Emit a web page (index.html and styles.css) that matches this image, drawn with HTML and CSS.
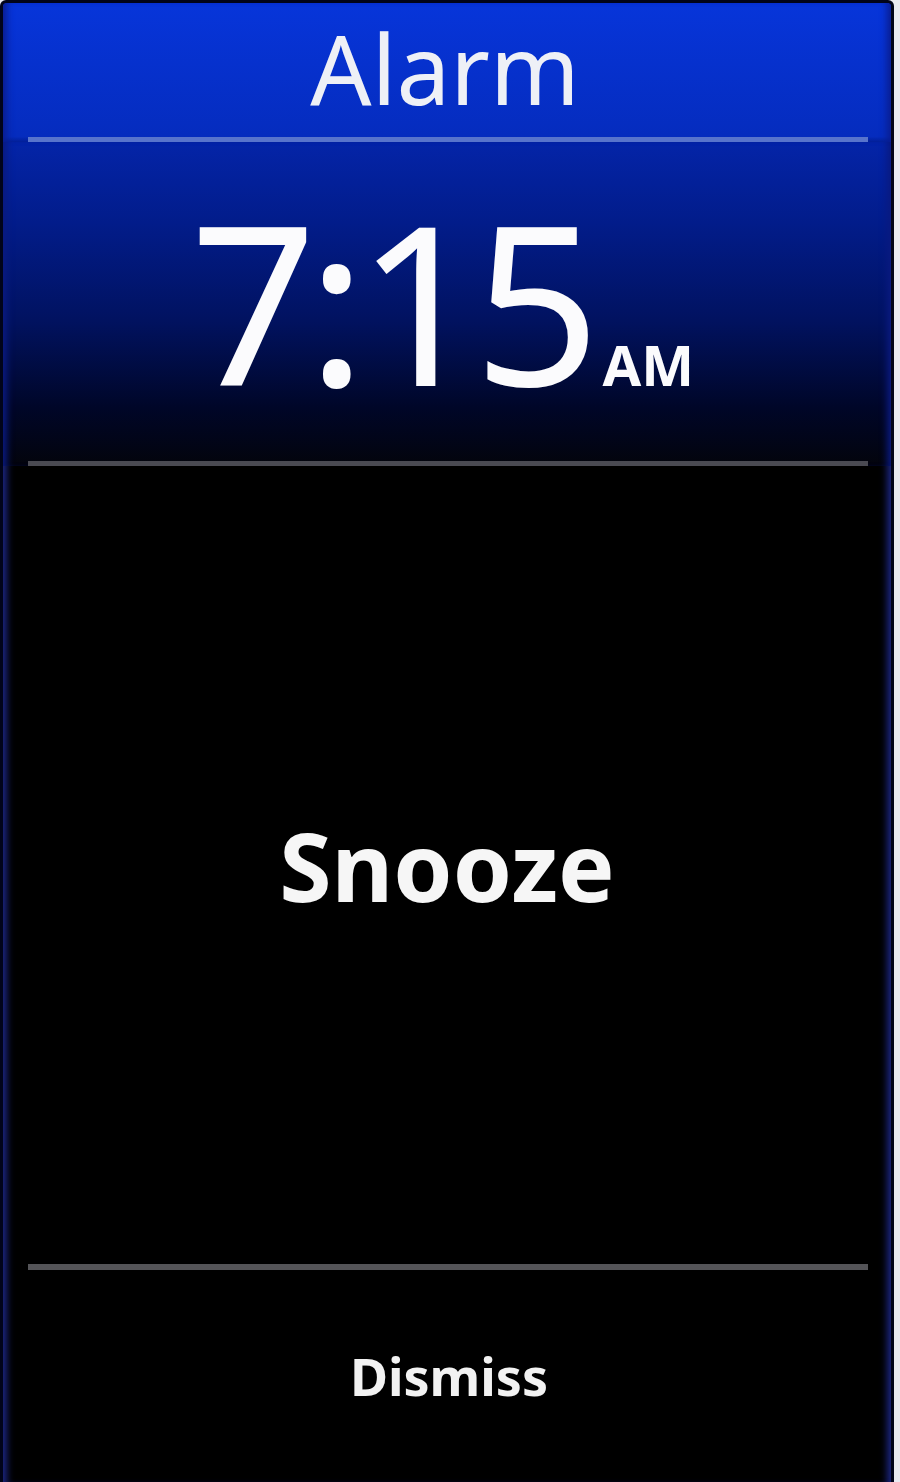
FILE: index.html
```html
<!DOCTYPE html>
<html>
<head>
<meta charset="utf-8">
<link rel="stylesheet" href="styles.css">
</head>
<body>
<div class="frame">
  <div class="screen">
    <div class="header">
      <div class="title">Alarm</div>
      <div class="rule rule-blue"></div>
    </div>
    <div class="time-area">
      <div class="time"><span class="digits">7:15</span><span class="ampm">AM</span></div>
      <div class="rule rule-gray"></div>
    </div>
    <div class="snooze">Snooze</div>
    <div class="rule rule-gray2"></div>
    <div class="dismiss">Dismiss</div>
  </div>
</div>
</body>
</html>
```
FILE: styles.css
```css
html, body {
  margin: 0;
  padding: 0;
  background: #e9eaf2;
}
body {
  width: 900px;
  height: 1482px;
  overflow: hidden;
  font-family: "Noto Sans", "Open Sans", sans-serif;
  color: #f4f5f8;
}
.frame {
  width: 894px;
  height: 1482px;
  background: #01041a;
  padding: 3px 0 0 3px;
  box-sizing: border-box;
  border-radius: 6px 6px 0 0;
}
.screen {
  width: 888px;
  height: 1479px;
  display: flex;
  flex-direction: column;
  background: #000;
  border-radius: 4px 4px 0 0;
  box-shadow: inset 9px 0 7px -5px #1b2580, inset -9px 0 7px -5px #1b2580;
  overflow: hidden;
}
.header {
  height: 139px;
  flex: none;
  background: linear-gradient(#0735da 0%, #052cbe 96%, #04229a 100%);
  display: flex;
  flex-direction: column;
  align-items: center;
  box-shadow: inset 9px 0 7px -5px #0a1d90, inset -9px 0 7px -5px #0a1d90;
}
.title {
  font-size: 96px;
  line-height: 130px;
  height: 136px;
  margin-left: -4px;
  color: #eef0f6;
}
.rule {
  height: 5px;
  flex: none;
  align-self: stretch;
  margin: 0 23px 0 25px;
}
.rule-blue {
  background: #5874cc;
  margin-top: -2px;
}
.time-area {
  height: 324px;
  flex: none;
  background: linear-gradient(#0424a8 0%, #021c8a 25%, #011260 55%, #000628 82%, #03040c 100%);
  display: flex;
  flex-direction: column;
  align-items: center;
  box-shadow: inset 9px 0 7px -5px #0a1a80, inset -9px 0 7px -5px #0a1a80;
}
.time {
  display: flex;
  align-items: baseline;
  margin-top: 43px;
  margin-left: -10px;
  height: 276px;
}
.digits {
  font-size: 222px;
  line-height: 230px;
  letter-spacing: -10px;
  color: #fbfbfd;
}
.ampm {
  font-size: 56px;
  font-weight: 700;
  margin-left: 12px;
  color: #fbfbfd;
}
.rule-gray {
  background: #4a4a52;
}
.rule-gray2 {
  background: #545458;
  height: 6px;
}
.snooze {
  height: 798px;
  flex: none;
  display: flex;
  align-items: center;
  justify-content: center;
  font-size: 95px;
  font-weight: 700;
  color: #f6f6f6;
  box-sizing: border-box;
}
.dismiss {
  flex: 1;
  display: flex;
  justify-content: center;
  font-size: 52px;
  font-weight: 700;
  color: #f2f2f2;
  padding-top: 80px;
  line-height: 1;
  padding-left: 4px;
}
```
